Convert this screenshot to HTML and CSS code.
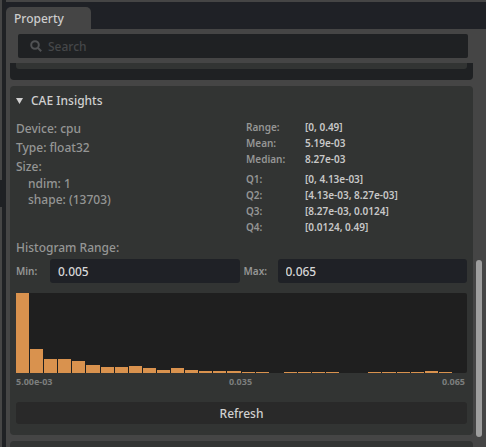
FILE: index.html
```html
<!DOCTYPE html>
<html lang="en">
<head>
    <meta charset="UTF-8">
    <title>Property</title>
    <link rel="stylesheet" href="styles.css">
</head>
<body>
    <div class="splitter"><div class="handle"></div></div>

    <div class="panel">
        <div class="tab-bar">
            <button class="tab">Property</button>
        </div>

        <label class="search">
            <svg width="12" height="12" viewBox="0 0 12 12" fill="none" stroke="#505254" stroke-width="2">
                <circle cx="5" cy="5" r="3.8"/>
                <path d="M7.8 7.8L11.2 11.2"/>
            </svg>
            <input type="text" placeholder="Search" aria-label="Search">
        </label>

        <div class="scroll-area">
            <div class="cards">
                <div class="card previous"><div class="previous-body"></div></div>

                <div class="card insights">
                    <h2><svg width="7" height="6" viewBox="0 0 7 6"><path d="M0 0H7L3.5 6Z" fill="#d0d0d0"/></svg>CAE Insights</h2>

                    <div class="info">
                        <div class="attributes">
                            <p>Device: cpu</p>
                            <p>Type: float32</p>
                            <p>Size:</p>
                            <p class="sub">ndim: 1</p>
                            <p class="sub">shape: (13703)</p>
                        </div>
                        <div class="stats">
                            <dl>
                                <dt>Range:</dt><dd>[0, 0.49]</dd>
                                <dt>Mean:</dt><dd>5.19e-03</dd>
                                <dt>Median:</dt><dd>8.27e-03</dd>
                            </dl>
                            <dl>
                                <dt>Q1:</dt><dd>[0, 4.13e-03]</dd>
                                <dt>Q2:</dt><dd>[4.13e-03, 8.27e-03]</dd>
                                <dt>Q3:</dt><dd>[8.27e-03, 0.0124]</dd>
                                <dt>Q4:</dt><dd>[0.0124, 0.49]</dd>
                            </dl>
                        </div>
                    </div>

                    <p class="range-title">Histogram Range:</p>
                    <div class="range">
                        <label for="min">Min:</label>
                        <input type="text" id="min" value="0.005">
                        <label for="max">Max:</label>
                        <input type="text" id="max" value="0.065">
                    </div>

                    <div class="histogram" id="histogram"></div>
                    <div class="axis">
                        <span>5.00e-03</span>
                        <span>0.035</span>
                        <span>0.065</span>
                    </div>

                    <button class="refresh">Refresh</button>
                </div>

                <div class="card next"></div>
            </div>
            <div class="scrollbar"><div class="thumb"></div></div>
        </div>
    </div>

    <script src="script.js"></script>
</body>
</html>
```
FILE: styles.css
```css
* {
    box-sizing: border-box;
}

body {
    font-family: 'Noto Sans', 'Open Sans', sans-serif;
    font-size: 12px;
    font-weight: 500;
    line-height: 16px;
    background: #454545;
    color: #959695;
    margin: 0;
    height: 100vh;
    display: flex;
    overflow: hidden;
}

p, h2, dl, dd {
    margin: 0;
}

button, input {
    font: inherit;
    border: none;
    outline: none;
}

.splitter {
    width: 6px;
    flex: none;
    border-right: 4px solid #1f2124;
    padding-top: 180px;
}

.handle {
    height: 27px;
    background: #1f2124;
}

.panel {
    flex: 1;
    min-width: 0;
    padding-top: 2px;
    display: flex;
    flex-direction: column;
}

.tab-bar {
    height: 27px;
    flex: none;
    padding-top: 5px;
    background: #1f2126;
}

.tab {
    width: 85px;
    height: 22px;
    padding: 2px 8px 0;
    text-align: left;
    background: #454545;
    color: #cccccc;
    border-radius: 5px 5px 0 0;
}

.search {
    height: 24px;
    flex: none;
    margin: 5px 18px 5px 12px;
    padding: 0 12px;
    display: flex;
    align-items: center;
    gap: 6px;
    background: #1f2123;
    border-radius: 2px;
}

.search input {
    flex: 1;
    padding: 2px 0 0;
    background: none;
    color: #cccccc;
}

.search input::placeholder {
    color: #454749;
}

.scroll-area {
    flex: 1;
    min-height: 0;
    display: flex;
    padding: 0 4px;
}

.cards {
    flex: 1;
    overflow: hidden;
}

.card {
    background: #323433;
    border-radius: 4px;
    margin-bottom: 6px;
}

.previous {
    height: 17px;
    padding: 0 6px;
    background: #1f2123;
    border-radius: 0 0 4px 4px;
}

.previous-body {
    height: 6px;
    background: #323433;
    border-radius: 0 0 3px 3px;
}

.insights {
    padding: 7px 6px 11px;
}

h2 {
    display: flex;
    align-items: center;
    gap: 8px;
    font-size: 12px;
    font-weight: 500;
    line-height: 16px;
    color: #d0d0d0;
}

.info {
    display: grid;
    grid-template-columns: 230px 1fr;
    margin-top: 10px;
}

.attributes p {
    line-height: 19px;
}

.attributes .sub {
    line-height: 16px;
    padding-left: 12px;
}

.stats {
    font-size: 10px;
    font-weight: 600;
}

dl {
    display: grid;
    grid-template-columns: 59px 1fr;
    margin-bottom: 4px;
}

dd {
    color: #c8c8c8;
}

.range-title {
    padding-top: 1px;
    margin-bottom: 3px;
}

.range {
    display: flex;
    align-items: center;
}

.range label {
    width: 34px;
    font-size: 10px;
    font-weight: 600;
}

.range input {
    flex: 1;
    min-width: 0;
    height: 24px;
    padding: 0 8px;
    background: #1f2126;
    color: #d6d6d6;
    border-radius: 3px;
}

.range input + label {
    padding-left: 4px;
    width: 38px;
}

.histogram {
    height: 80px;
    margin-top: 10px;
    display: flex;
    align-items: flex-end;
    background: #1f1f1f;
    border-radius: 2px;
}

.bar {
    flex: 1;
    background: #d9924e;
    background-clip: content-box;
    padding-right: 1px;
}

.axis {
    display: grid;
    grid-template-columns: 1fr auto 1fr;
    padding: 1px 2px 0 0;
    font-size: 9px;
    font-weight: 700;
    color: #7c7e7d;
}

.axis span:last-child {
    text-align: right;
}

.refresh {
    display: block;
    width: 100%;
    height: 22px;
    margin-top: 12px;
    padding: 2px 0 0;
    background: #292929;
    color: #d0d0d0;
    border-radius: 3px;
}

.next {
    height: 40px;
    margin: 0;
}

.scrollbar {
    width: 9px;
    padding: 197px 0 0 3px;
}

.thumb {
    height: 177px;
    background: #9e9e9e;
    border-radius: 3px;
}
```
FILE: script.js
```js
// bar heights in percent of the tallest bin are computed from these
const bins = [
    80, 24, 14, 14, 12, 8, 6, 6, 7, 5, 3, 5, 3, 2, 2, 2,
    1, 1, 0, 1, 1, 1, 1, 0, 0, 1, 1, 1, 1, 2, 1, 0
];

const histogram = document.getElementById("histogram");
const tallest = Math.max(...bins);

bins.forEach(count => {
    const bar = document.createElement("div");
    bar.className = "bar";
    bar.style.height = `${count / tallest * 100}%`;
    histogram.appendChild(bar);
});
```
